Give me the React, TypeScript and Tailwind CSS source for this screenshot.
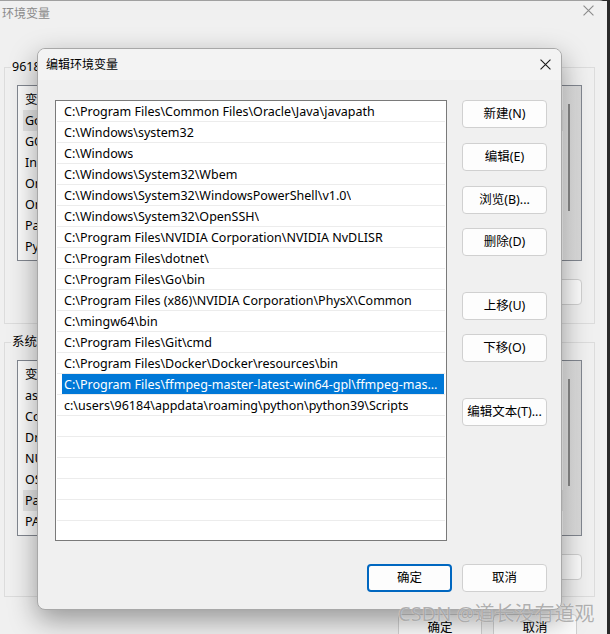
import React from "react";

const FONT = { fontFamily: '"Noto Sans", "Noto Sans CJK SC", sans-serif' };

const paths = [
  "C:\\Program Files\\Common Files\\Oracle\\Java\\javapath",
  "C:\\Windows\\system32",
  "C:\\Windows",
  "C:\\Windows\\System32\\Wbem",
  "C:\\Windows\\System32\\WindowsPowerShell\\v1.0\\",
  "C:\\Windows\\System32\\OpenSSH\\",
  "C:\\Program Files\\NVIDIA Corporation\\NVIDIA NvDLISR",
  "C:\\Program Files\\dotnet\\",
  "C:\\Program Files\\Go\\bin",
  "C:\\Program Files (x86)\\NVIDIA Corporation\\PhysX\\Common",
  "C:\\mingw64\\bin",
  "C:\\Program Files\\Git\\cmd",
  "C:\\Program Files\\Docker\\Docker\\resources\\bin",
  "C:\\Program Files\\ffmpeg-master-latest-win64-gpl\\ffmpeg-master-latest-win64-gpl\\bin",
  "c:\\users\\96184\\appdata\\roaming\\python\\python39\\Scripts",
];

function CloseX({ color, size }: { color: string; size: number }) {
  return (
    <svg width={size} height={size} viewBox="0 0 10 10">
      <path d="M0.5 0.5 L9.5 9.5 M9.5 0.5 L0.5 9.5" stroke={color} strokeWidth="1" fill="none" />
    </svg>
  );
}

function BgList({ items, selected }: { items: string[]; selected: number }) {
  return (
    <div className="h-[176px] border border-[#828790] bg-[#fbfbfb] flex">
      <div className="flex-1 flex flex-col pt-[3px] pl-[5px]">
        {items.map((t, i) => (
          <div
            key={i}
            className={`h-[21px] flex items-center pl-[2px] pt-[1px] text-[12.5px] text-black whitespace-nowrap ${
              i === selected ? "bg-[#e5e5e5]" : ""
            }`}
          >
            {t}
          </div>
        ))}
      </div>
      <div className="w-[18px] bg-gradient-to-r from-[#e8e8e8] to-[#d8d8d8] flex justify-center pt-[18px] pr-[6px]">
        <div className="w-[2px] h-[107px] bg-[#8a8a8a]" />
      </div>
    </div>
  );
}

function BgButton({ label }: { label: string }) {
  return (
    <div className="w-[82px] h-[26px] rounded-[4px] border border-[#d0d0d0] bg-[#fbfbfb] flex items-center justify-center text-[12.5px]">
      {label}
    </div>
  );
}

function Btn({ label, primary }: { label: string; primary?: boolean }) {
  return (
    <div
      className={`w-[85px] h-[28px] rounded-[4px] bg-[#fdfdfd] flex items-center justify-center text-[12.5px] text-black ${
        primary ? "border-2 border-[#0067c0]" : "border border-[#d0d0d0]"
      }`}
    >
      {label}
    </div>
  );
}

export default function App() {
  return (
    <div className="relative w-[610px] h-[634px] overflow-hidden bg-[#2a2a2a]" style={FONT}>
      {/* background window */}
      <div className="w-[607px] h-[634px] bg-[#f0f0f0] border-t border-[#a0a0a0] rounded-tr-[8px] flex flex-col">
        <div className="h-[30px] flex items-start justify-between pl-[2px] pr-[13px] pt-[4px] bg-[#f0f0f0]">
          <span className="text-[12px] text-[#8a8a8a]">环境变量</span>
          <CloseX color="#8a8a8a" size={11} />
        </div>
        <div className="flex flex-col pl-[4px] pr-[12px] pt-[35px]">
          <fieldset className="border border-[#dcdcdc] h-[266px] px-[12px]">
            <legend className="-ml-[6px] px-[1px] text-[12.5px] text-black leading-[18px]">96184 的用户变量(U)</legend>
            <div className="mt-[9px]">
              <BgList
                items={["变量", "GoLand", "GOPATH", "IntelliJ IDEA", "OneDrive", "OneDriveConsumer", "Path", "PyCharm"]}
                selected={1}
              />
            </div>
            <div className="mt-[18px] flex justify-end gap-[9px]">
              <BgButton label="新建(N)..." />
              <BgButton label="编辑(E)..." />
              <BgButton label="删除(D)" />
            </div>
          </fieldset>
          <fieldset className="mt-[9px] border border-[#dcdcdc] h-[264px] px-[12px]">
            <legend className="-ml-[6px] px-[1px] text-[12.5px] text-black leading-[18px]">系统变量(S)</legend>
            <div className="mt-[9px]">
              <BgList
                items={["变量", "asl.log", "ComSpec", "DriverData", "NUMBER_OF_PROCESSORS", "OS", "Path", "PATHEXT"]}
                selected={6}
              />
            </div>
            <div className="mt-[18px] flex justify-end gap-[9px]">
              <BgButton label="新建(W)..." />
              <BgButton label="编辑(I)..." />
              <BgButton label="删除(L)" />
            </div>
          </fieldset>
          <div className="mt-[17px] flex justify-end gap-[11px] pr-[18px]">
            <div className="w-[84px] h-[28px] rounded-[4px] border border-[#d0d0d0] bg-[#fbfbfb] flex items-center justify-center text-[12.5px]">
              确定
            </div>
            <div className="w-[84px] h-[28px] rounded-[4px] border border-[#d0d0d0] bg-[#fbfbfb] flex items-center justify-center text-[12.5px]">
              取消
            </div>
          </div>
        </div>
      </div>

      {/* edit dialog */}
      <div className="absolute left-[37px] top-[48px] w-[525px] h-[562px] rounded-[8px] border border-[#a8a8a8] bg-[#f0f0f0] shadow-[0_10px_28px_rgba(0,0,0,0.38)] flex flex-col overflow-hidden">
        <div className="h-[31px] bg-[#f3f3f3] flex items-center justify-between pl-[8px] pr-[10px]">
          <span className="text-[12px] text-black">编辑环境变量</span>
          <CloseX color="#1a1a1a" size={11} />
        </div>
        <div className="flex flex-col pl-[17px] pr-[14px] pt-[20px]">
          <div className="flex gap-[15px]">
            <div className="w-[392px] h-[441px] border border-[#7a7a7a] bg-white overflow-hidden flex flex-col pl-[1px] pr-[1px]">
              {Array.from({ length: 21 }).map((_, i) => {
                const t = paths[i];
                const sel = i === 13;
                return (
                  <div key={i} className="h-[21px] shrink-0 border-b border-[#ececec] flex">
                    <div
                      className={`ml-[5px] mr-[1px] flex-1 min-w-0 flex items-center pl-[2px] pr-[4px] pt-[2px] text-[12.5px] ${
                        sel ? "bg-[#0078d7] text-white" : "text-black"
                      }`}
                    >
                      <span className="truncate">{t ?? ""}</span>
                    </div>
                  </div>
                );
              })}
            </div>
            <div className="flex flex-col">
              <Btn label="新建(N)" />
              <div className="mt-[15px]"><Btn label="编辑(E)" /></div>
              <div className="mt-[15px]"><Btn label="浏览(B)..." /></div>
              <div className="mt-[14px]"><Btn label="删除(D)" /></div>
              <div className="mt-[36px]"><Btn label="上移(U)" /></div>
              <div className="mt-[14px]"><Btn label="下移(O)" /></div>
              <div className="mt-[36px]"><Btn label="编辑文本(T)..." /></div>
            </div>
          </div>
          <div className="mt-[23px] flex justify-end gap-[10px]">
            <Btn label="确定" primary />
            <Btn label="取消" />
          </div>
        </div>
      </div>

      {/* watermark */}
      <div className="absolute left-[398px] top-[599px] text-[20px] text-[rgba(150,150,150,0.75)] whitespace-nowrap [text-shadow:0_0_1px_rgba(255,255,255,0.8)]">
        CSDN @道长没有道观
      </div>
    </div>
  );
}
